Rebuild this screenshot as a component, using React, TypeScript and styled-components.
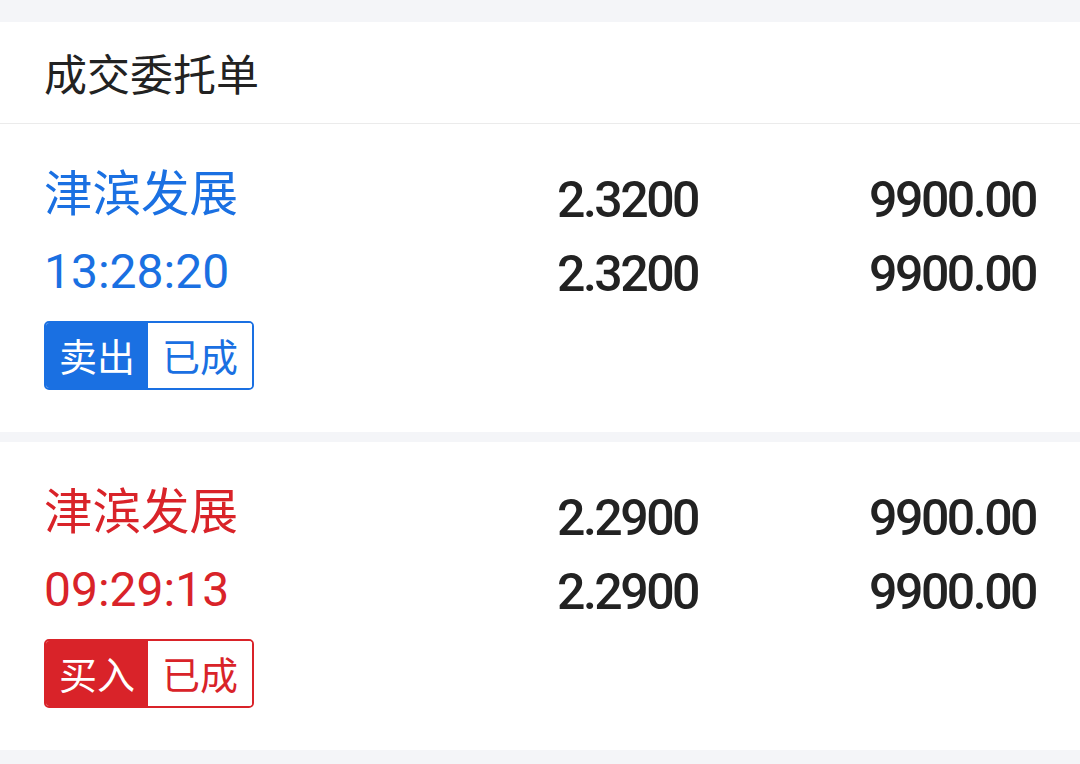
import React from "react";
import styled, { createGlobalStyle } from "styled-components";

const Global = createGlobalStyle`
  html, body { margin: 0; padding: 0; background: #f4f5f8; }
  body { font-family: Roboto, "Noto Sans CJK SC", sans-serif; }
`;

const Page = styled.div`
  padding-top: 22px;
  display: flex;
  flex-direction: column;
  gap: 10px;
  padding-bottom: 14px;
`;

const Section = styled.div`
  display: flex;
  flex-direction: column;
`;

const Header = styled.div`
  background: #fff;
  height: 102px;
  display: flex;
  align-items: center;
  padding: 0 44px 2px;
  box-sizing: border-box;
  border-bottom: 1px solid #ebebeb;
  font-family: "Noto Sans CJK SC", sans-serif;
  font-size: 43px;
  color: #222;
`;

const Card = styled.div`
  background: #fff;
  height: 308px;
  box-sizing: border-box;
  padding: 21px 44px 0 44px;
  display: grid;
  grid-template-columns: 1fr 160px 338px;
`;

const Left = styled.div<{ $c: string }>`
  display: flex;
  flex-direction: column;
  align-items: flex-start;
  color: ${(p) => p.$c};
`;

const Name = styled.div`
  font-family: "Noto Sans CJK SC", sans-serif;
  font-size: 48.5px;
  line-height: 90px;
  height: 90px;
`;

const Time = styled.div`
  font-family: Roboto, sans-serif;
  font-weight: 400;
  font-size: 48px;
  line-height: 74px;
  height: 74px;
  letter-spacing: 0px;
`;

const Badge = styled.div<{ $c: string }>`
  margin-top: 12px;
  display: flex;
  height: 69px;
  box-sizing: border-box;
  border: 2px solid ${(p) => p.$c};
  border-radius: 5px;
  overflow: hidden;
  font-family: "Noto Sans CJK SC", sans-serif;
  font-size: 38px;
`;

const BadgePart = styled.div<{ $c: string; $filled?: boolean }>`
  display: flex;
  align-items: center;
  justify-content: center;
  padding-bottom: 2px;
  width: ${(p) => (p.$filled ? "102px" : "104px")};
  background: ${(p) => (p.$filled ? p.$c : "#fff")};
  color: ${(p) => (p.$filled ? "#fff" : p.$c)};
`;

const NumCol = styled.div`
  display: flex;
  flex-direction: column;
  align-items: flex-end;
  padding-top: 18px;
`;

const Num = styled.div`
  font-family: Roboto, sans-serif;
  font-weight: 500;
  font-size: 50px;
  letter-spacing: -2.5px;
  line-height: 74px;
  height: 74px;
  color: #222;
`;

type Order = {
  name: string;
  time: string;
  side: string;
  status: string;
  color: string;
  price: string;
  amount: string;
};

const orders: Order[] = [
  { name: "津滨发展", time: "13:28:20", side: "卖出", status: "已成", color: "#1a70e2", price: "2.3200", amount: "9900.00" },
  { name: "津滨发展", time: "09:29:13", side: "买入", status: "已成", color: "#d92329", price: "2.2900", amount: "9900.00" },
];

function OrderCard({ o }: { o: Order }) {
  return (
    <Card>
      <Left $c={o.color}>
        <Name>{o.name}</Name>
        <Time>{o.time}</Time>
        <Badge $c={o.color}>
          <BadgePart $c={o.color} $filled>{o.side}</BadgePart>
          <BadgePart $c={o.color}>{o.status}</BadgePart>
        </Badge>
      </Left>
      <NumCol>
        <Num>{o.price}</Num>
        <Num>{o.price}</Num>
      </NumCol>
      <NumCol>
        <Num>{o.amount}</Num>
        <Num>{o.amount}</Num>
      </NumCol>
    </Card>
  );
}

export default function App() {
  return (
    <>
      <Global />
      <Page>
        <Section>
          <Header>成交委托单</Header>
          <OrderCard o={orders[0]} />
        </Section>
        {orders.slice(1).map((o, i) => (
          <OrderCard key={i} o={o} />
        ))}
      </Page>
    </>
  );
}
